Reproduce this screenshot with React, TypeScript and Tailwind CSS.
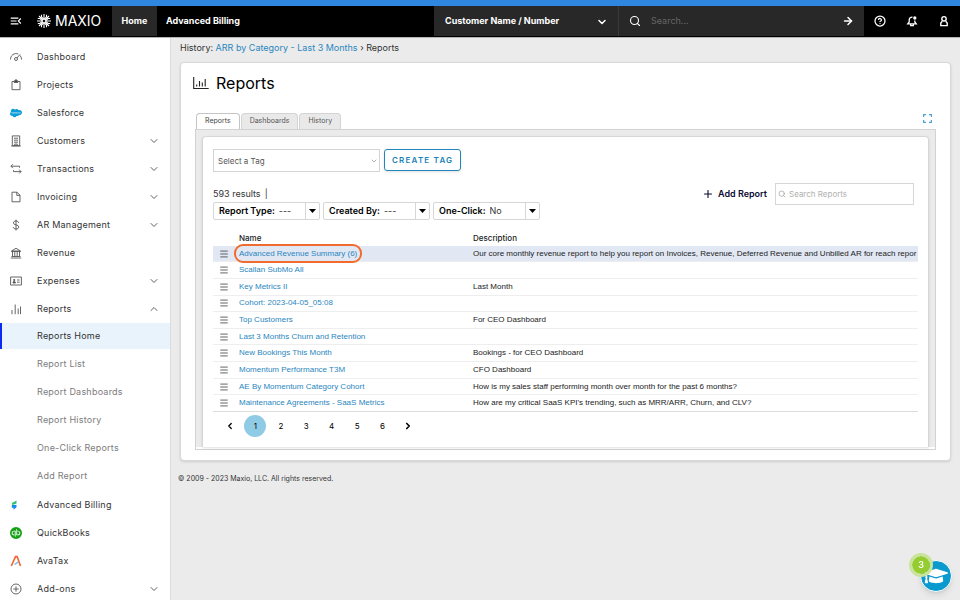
import { useState, type ReactNode } from 'react';
import { MdMenuOpen } from 'react-icons/md';
import { FaSalesforce, FaGraduationCap } from 'react-icons/fa';
import { SiQuickbooks } from 'react-icons/si';
import { ArrowRight, ChevronDown, ChevronUp, ChevronLeft, ChevronRight, CircleHelp, Menu, Plus, Search } from 'lucide-react';

interface NavItem {
  label: string;
  icon: ReactNode;
  expandable?: boolean;
  children?: string[];
}

interface Report {
  name: string;
  description?: string;
}

function LineIcon({ children }: { children: ReactNode }) {
  return (
    <svg viewBox="0 0 12 12" className="w-3 h-3" fill="none" stroke="currentColor" strokeWidth="0.9" aria-hidden="true">
      {children}
    </svg>
  );
}

const navItems: NavItem[] = [
  {
    label: 'Dashboard',
    icon: (
      <LineIcon>
        <path d="M.6 8.600A5.500 5.500 0 0 1 8.200 3M10 4.400a5.500 5.500 0 0 1 1.500 4.200M7 7 10 3.400" />
        <circle cx="6" cy="8" r="1.500" />
      </LineIcon>
    ),
  },
  {
    label: 'Projects',
    icon: (
      <LineIcon>
        <path d="M4 2.500H2v8.200h8V2.500H8" />
        <path d="M4.300 1.800h3.400v1.700H4.300zM5.500.8h1v1h-1z" fill="currentColor" />
      </LineIcon>
    ),
  },
  { label: 'Salesforce', icon: <FaSalesforce className="w-3 h-3 text-[#0d9dda]" /> },
  {
    label: 'Customers',
    icon: (
      <LineIcon>
        <path d="M2.300.9h7.400v9.800H2.300zM1.200 11h9.600M4 3.200h4M4 5.200h4M4 7.200h4M4.800 11V9h2.400v2" />
      </LineIcon>
    ),
    expandable: true,
  },
  {
    label: 'Transactions',
    icon: (
      <LineIcon>
        <path d="M2.800 1.300.9 3.200l1.900 1.900M1 3.200h8.500v1.500M9.200 6.700l1.900 1.900-1.900 1.900M11 8.600H3.500V7.100" />
      </LineIcon>
    ),
    expandable: true,
  },
  {
    label: 'Invoicing',
    icon: (
      <LineIcon>
        <path d="M2 1.200h5l3 3v6.600H2zM6.800 1.200v3.200H10" />
      </LineIcon>
    ),
    expandable: true,
  },
  {
    label: 'AR Management',
    icon: (
      <LineIcon>
        <path d="M6 .6v10.800M8.700 3.900C8.500 2.700 7.500 2 6 2s-2.600.7-2.600 1.900C3.400 6.800 8.800 5 8.800 8c0 1.300-1.200 2-2.800 2S3.300 9.300 3.200 7.900" />
      </LineIcon>
    ),
    expandable: true,
  },
  {
    label: 'Revenue',
    icon: (
      <LineIcon>
        <path d="M1.500 4 6 1.300 10.500 4zM1.200 4.500h9.600M2.500 5v4.500M4.800 5v4.500M7.200 5v4.500M9.500 5v4.500M1.500 9.500h9M.8 11h10.400" />
      </LineIcon>
    ),
  },
  {
    label: 'Expenses',
    icon: (
      <LineIcon>
        <path d="M.6 2h10.800v8H.6zM7 5h2.600M7 7.200h2.600" />
        <path d="M3 8c0-1.200.4-1.600 1.200-1.600S5.400 6.800 5.400 8zM3.700 4.500h1v1h-1z" fill="currentColor" />
      </LineIcon>
    ),
    expandable: true,
  },
  {
    label: 'Reports',
    icon: (
      <LineIcon>
        <path d="M2 7v4.200M5.200 1.500v9.700M8.200 5.500v5.700M10.500 3.500v7.700" />
      </LineIcon>
    ),
    children: ['Reports Home', 'Report List', 'Report Dashboards', 'Report History', 'One-Click Reports', 'Add Report'],
  },
  {
    label: 'Advanced Billing',
    icon: (
      <svg viewBox="0 0 12 12" className="w-3 h-3" aria-hidden="true">
        <path d="M2 4 6.500 1.400v3.200L4 5.500 2 6z" fill="#2fc36b" />
        <path d="M1.800 6h4.700v2.200L3.500 10.800V8.800H1.800z" fill="#168bf2" />
      </svg>
    ),
  },
  { label: 'QuickBooks', icon: <SiQuickbooks className="w-3 h-3 text-[#16a016]" /> },
  {
    label: 'AvaTax',
    icon: (
      <svg viewBox="0 0 12 12" className="w-3 h-3" fill="none" aria-hidden="true">
        <path d="M1.300 11 5.500 1.600h1.600L10.500 11" stroke="#f4632d" strokeWidth="1.600" />
        <path d="m4.500 9.500 4-2.700" stroke="#7ab8e6" strokeWidth="1.500" />
      </svg>
    ),
  },
  {
    label: 'Add-ons',
    icon: (
      <LineIcon>
        <circle cx="6" cy="6" r="5" />
        <path d="M6 3.300v5.400M3.300 6h5.400" />
      </LineIcon>
    ),
    expandable: true,
  },
];

const reports: Report[] = [
  {
    name: 'Advanced Revenue Summary (6)',
    description: 'Our core monthly revenue report to help you report on Invoices, Revenue, Deferred Revenue and Unbilled AR for reach repor',
  },
  { name: 'Scallan SubMo All' },
  { name: 'Key Metrics II', description: 'Last Month' },
  { name: 'Cohort: 2023-04-05_05:08' },
  { name: 'Top Customers', description: 'For CEO Dashboard' },
  { name: 'Last 3 Months Churn and Retention' },
  { name: 'New Bookings This Month', description: 'Bookings - for CEO Dashboard' },
  { name: 'Momentum Performance T3M', description: 'CFO Dashboard' },
  { name: 'AE By Momentum Category Cohort', description: 'How is my sales staff performing month over month for the past 6 months?' },
  { name: 'Maintenance Agreements - SaaS Metrics', description: "How are my critical SaaS KPI's trending, such as MRR/ARR, Churn, and CLV?" },
];

const filters = [
  { id: 'report-type', label: 'Report Type:', value: '---' },
  { id: 'created-by', label: 'Created By:', value: '---' },
  { id: 'one-click', label: 'One-Click:', value: 'No' },
];

function MaxioLogo() {
  return (
    <a href="#" aria-label="Maxio" className="flex items-center gap-1 text-white">
      <svg viewBox="0 0 14 14" className="w-3.5 h-3.5" fill="none" stroke="currentColor" strokeWidth="1.100" aria-hidden="true">
        <path d="M7 0v5.500M7 8.500V14M0 7h5.500M8.500 7H14M2 2l4 4M12 2 8 6M2 12l4-4M12 12 8 8" />
        <path d="M4.500.8v2.200L7 5.500l2.500-2.500V.8M4.500 13.200V11L7 8.500 9.500 11v2.200M.8 4.500H3L5.500 7 3 9.500H.8M13.200 4.500H11L8.500 7l2.500 2.500h2.200" />
      </svg>
      <span className="text-[14px] leading-4">MAXIO</span>
    </a>
  );
}

function TopBar() {
  return (
    <header className="shrink-0 border-t-[6px] border-[#2e86de] bg-black text-white">
      <div className="flex h-8 border-b border-[#b5b5b5] pb-px">
        <button aria-label="Collapse menu" className="w-8 flex items-center justify-center">
          <MdMenuOpen className="w-3.5 h-3.5" />
        </button>
        <div className="w-20 flex items-center pl-[5px]">
          <MaxioLogo />
        </div>
        <nav className="flex text-[9px] font-bold">
          <a href="#" className="w-[45px] flex items-center justify-center bg-[#282828]">Home</a>
          <a href="#" className="flex items-center px-[9px]">Advanced Billing</a>
        </nav>
        <div className="ml-auto flex bg-[#282828]">
          <div className="relative w-[185px] border-r border-[#3a3a3a]">
            <select aria-label="Search by" className="appearance-none w-full h-full pl-[11px] text-[9px] font-bold bg-transparent">
              <option>Customer Name / Number</option>
            </select>
            <ChevronDown className="absolute right-2.5 top-2.5 w-3 h-3 pointer-events-none" strokeWidth={3} />
          </div>
          <div className="w-[245px] flex items-center gap-2.5 px-2.5">
            <Search className="w-3 h-3" strokeWidth={2.2} />
            <input
              type="text"
              aria-label="Search"
              placeholder="Search..."
              className="flex-1 min-w-0 text-[9px] bg-transparent outline-none placeholder:text-[#666666]"
            />
            <button aria-label="Go">
              <ArrowRight className="w-3 h-3" strokeWidth={3} />
            </button>
          </div>
        </div>
        <div className="flex w-24">
          <button aria-label="Help" className="flex-1 flex items-center justify-center">
            <CircleHelp className="w-3 h-3" strokeWidth={2.5} />
          </button>
          <button aria-label="Notifications" className="flex-1 flex items-center justify-center">
            <svg viewBox="0 0 12 12" className="w-3 h-3" fill="none" stroke="currentColor" strokeWidth="1.300">
              <path d="M6.500 2.200A2.800 2.800 0 0 0 3.200 5v2L1.800 8.800h8.400L8.800 7V5.500M4.700 9v1.700h2.600V9" />
              <circle cx="8.800" cy="3" r="1" fill="currentColor" />
            </svg>
          </button>
          <button aria-label="Account" className="flex-1 flex items-center justify-center">
            <svg viewBox="0 0 12 12" className="w-3 h-3" fill="none" stroke="currentColor" strokeWidth="1.400">
              <circle cx="6" cy="3.800" r="2.200" />
              <path d="M4.300 6.200 2.800 8v2.600h6.400V8L7.700 6.200" />
            </svg>
          </button>
        </div>
      </div>
    </header>
  );
}

function Sidebar() {
  return (
    <nav className="w-[171px] shrink-0 bg-white border-r border-[#dcdcdc] pt-[5px] overflow-y-auto [scrollbar-width:none] text-[9px] text-[#333333]">
      <ul>
        {navItems.map((item) => (
          <li key={item.label}>
            <a href="#" className="h-7 flex items-center px-2.5">
              <span className="w-[27px] text-[#555555]">{item.icon}</span>
              <span className="flex-1 tracking-wide">{item.label}</span>
              {item.expandable && <ChevronDown className="w-3 h-3 text-[#606060]" strokeWidth={2} />}
              {item.children && <ChevronUp className="w-3 h-3 text-[#606060]" strokeWidth={2} />}
            </a>
            {item.children && (
              <ul>
                {item.children.map((child, i) => (
                  <li key={child} className="h-7">
                    <a
                      href="#"
                      className={`h-[26px] flex items-center border-l-2 pl-[35px] tracking-wide ${
                        i === 0 ? 'border-[#0a2cf0] bg-[#e9f3fc]' : 'border-transparent text-[#7c7c7c]'
                      }`}
                    >
                      {child}
                    </a>
                  </li>
                ))}
              </ul>
            )}
          </li>
        ))}
      </ul>
    </nav>
  );
}

function ReportTable() {
  return (
    <table className="w-full h-[182px] mt-2.5 table-fixed border-collapse border-b border-[#dddddd] font-['Liberation_Sans',sans-serif] text-[8px] leading-[10px] text-[#222222]">
      <colgroup>
        <col className="w-[26px]" />
        <col className="w-[234px]" />
        <col />
      </colgroup>
      <thead>
        <tr className="h-4 text-left font-['Inter',sans-serif]">
          <th aria-label="Actions" />
          <th className="font-medium">Name</th>
          <th className="font-medium">Description</th>
        </tr>
      </thead>
      <tbody>
        {reports.map((report, i) => (
          <tr key={report.name} className={i === 0 ? 'bg-[#e1e8f4]' : 'border-t border-[#eeeeee]'}>
            <td className="pl-1.5">
              <Menu className="w-2.5 h-2.5 text-[#444444]" />
            </td>
            <td>
              <a
                href="#"
                className={`text-[#2a86c0] ${i === 0 ? 'rounded-sm outline-2 outline-offset-3 outline-[#f26b2e]' : ''}`}
              >
                {report.name}
              </a>
            </td>
            <td className="whitespace-nowrap">{report.description}</td>
          </tr>
        ))}
      </tbody>
    </table>
  );
}

function Pagination() {
  const [page, setPage] = useState(1);

  return (
    <nav aria-label="Pagination" className="w-[200px] mt-[3px] ml-1.5 flex justify-between text-[8px] text-black">
      <button aria-label="Previous page" className="w-[22px] h-[22px] flex items-center justify-center">
        <ChevronLeft className="w-2.5 h-2.5" strokeWidth={3} />
      </button>
      {[1, 2, 3, 4, 5, 6].map((n) => (
        <button
          key={n}
          onClick={() => setPage(n)}
          className={`w-[22px] h-[22px] rounded-full ${n === page ? 'bg-[#90cbe6]' : ''}`}
        >
          {n}
        </button>
      ))}
      <button aria-label="Next page" className="w-[22px] h-[22px] flex items-center justify-center">
        <ChevronRight className="w-2.5 h-2.5" strokeWidth={4} />
      </button>
    </nav>
  );
}

function ReportsPanel() {
  return (
    <div className="border border-[#d2d2d2] pb-0.5">
      <div className="bg-[#ebebeb] px-1.5 pt-1.5">
        <div className="bg-white border border-b-0 border-[#d6d6d6] rounded-t shadow-sm px-2.5 pt-3 pb-2.5">
          <div className="flex items-start gap-1">
            <div className="relative">
              <select
                aria-label="Tag"
                className="block appearance-none w-[167px] h-[23px] border border-[#d4d4d4] px-1 text-[8px] text-[#555555] bg-white"
              >
                <option>Select a Tag</option>
              </select>
              <ChevronDown className="absolute right-0.5 top-2 w-2 h-2 text-[#888888] pointer-events-none" />
            </div>
            <button className="h-[22px] px-[7px] border border-[#2088bd] rounded-[3px] shadow text-[8px] font-semibold tracking-[0.15em] text-[#1a82b8]">
              CREATE TAG
            </button>
          </div>

          <div className="flex items-end mt-[11px]">
            <div>
              <p className="flex items-center gap-1 text-[9px] leading-3 text-[#333333] mb-0.5">
                593 results <span>|</span>
              </p>
              <div className="flex gap-[3px]">
                {filters.map((filter) => (
                  <div key={filter.id} className="relative w-[107px] h-[18px] flex items-center border border-[#d6d6d6] rounded-xs text-[9px]">
                    <label htmlFor={filter.id} className="pl-[5px] pr-1 font-semibold text-black">{filter.label}</label>
                    <select id={filter.id} className="appearance-none flex-1 min-w-0 h-full text-[#333333] bg-transparent">
                      <option>{filter.value}</option>
                    </select>
                    <span className="absolute right-0 inset-y-0 w-3.5 flex items-center justify-center border-l border-[#d6d6d6] pointer-events-none">
                      <svg viewBox="0 0 7 4" className="w-[7px] h-1" fill="black">
                        <path d="M0 0h7L3.500 4z" />
                      </svg>
                    </span>
                  </div>
                ))}
              </div>
            </div>
            <div className="ml-auto mr-1 mb-[15px] flex items-center gap-2">
              <button className="flex items-center gap-1 text-[9px] font-semibold text-[#0b0b33]">
                <Plus className="w-3 h-3" strokeWidth={2.2} />
                Add Report
              </button>
              <label className="w-[139px] h-[22px] flex items-center gap-[3px] px-0.5 border border-[#d6d6d6]">
                <Search className="w-2 h-2 text-[#999999]" />
                <input
                  type="text"
                  aria-label="Search Reports"
                  placeholder="Search Reports"
                  className="flex-1 min-w-0 text-[8px] outline-none placeholder:text-[#b0b0b0]"
                />
              </label>
            </div>
          </div>

          <ReportTable />
          <Pagination />
        </div>
      </div>
    </div>
  );
}

export default function App() {
  const tabs = ['Reports', 'Dashboards', 'History'];
  const [activeTab, setActiveTab] = useState('Reports');

  return (
    <div className="h-screen flex flex-col overflow-hidden bg-[#ebebeb] font-['Inter',sans-serif]">
      <TopBar />
      <div className="flex-1 min-h-0 flex">
        <Sidebar />
        <main className="flex-1 min-w-0 overflow-y-auto px-[9px]">
          <p className="pt-1 text-[9px] leading-3 text-[#333333]">
            History: <a href="#" className="text-[#2a86c0]">ARR by Category - Last 3 Months</a> › Reports
          </p>

          {/* Reports card */}
          <section className="mt-2 bg-white border border-[#d8d8d8] rounded shadow px-3.5 pb-2.5">
            <h1 className="-ml-0.5 pt-2.5 flex items-center gap-[7px] text-[16px] leading-5 text-black">
              <svg viewBox="0 0 16 14" className="w-4 h-3.5" fill="none" stroke="#222222" strokeWidth="1.100" aria-hidden="true">
                <path d="M.7 1v11.500h15M3.700 10.500v-2M6.500 10.500V5M9.300 10.500V6.500M12.200 10.500V3" />
              </svg>
              Reports
            </h1>
            <div className="mt-5 flex items-end gap-px">
              {tabs.map((tab) => (
                <button
                  key={tab}
                  onClick={() => setActiveTab(tab)}
                  className={`h-4 px-2 border border-b-0 rounded-t-sm text-[7px] first:ml-px ${
                    activeTab === tab ? 'border-[#c4c4c4] bg-white text-[#444444]' : 'border-[#d4d4d4] bg-[#e9e9e9] text-[#555555]'
                  }`}
                >
                  {tab}
                </button>
              ))}
              <button aria-label="Full screen" className="ml-auto mr-1 mb-1.5">
                <svg viewBox="0 0 9 9" className="w-[9px] h-[9px]" fill="none" stroke="#4fa3d8" strokeWidth="1.200">
                  <path d="M.6 3V.6H3M6 .6h2.400V3M8.400 6v2.400H6M3 8.400H.6V6" />
                </svg>
              </button>
            </div>
            <ReportsPanel />
          </section>

          <footer className="-ml-0.5 mt-3 text-[7px] leading-3 text-[#333333]">© 2009 - 2023 Maxio, LLC. All rights reserved.</footer>
        </main>
      </div>

      {/* Learning center launcher */}
      <button
        aria-label="Learning center, 3 new"
        className="fixed right-2 bottom-2 w-8 h-8 rounded-full bg-[#0a9ace] border border-white shadow-md flex items-center justify-center text-white"
      >
        <FaGraduationCap className="w-6 h-6" />
        <span className="absolute -left-3 -top-2 w-6 h-6 rounded-full bg-[#95cd30] border-[3px] border-[#c9e39b] bg-clip-padding flex items-center justify-center text-[9px] font-semibold">
          3
        </span>
      </button>
    </div>
  );
}
